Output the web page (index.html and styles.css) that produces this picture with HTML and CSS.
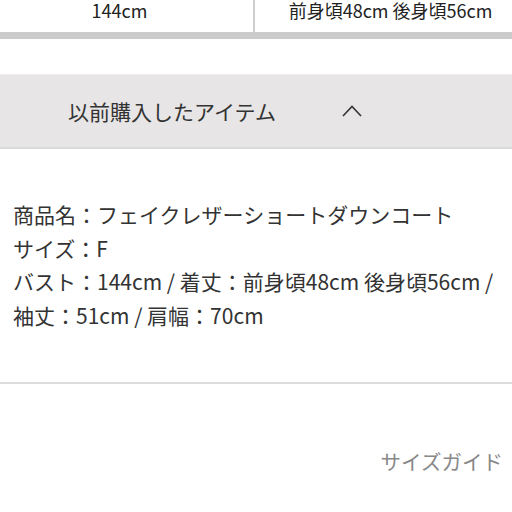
FILE: index.html
```html
<!DOCTYPE html>
<html lang="ja">
<head>
<meta charset="utf-8">
<link rel="stylesheet" href="styles.css">
</head>
<body>
<div class="size-table">
  <div class="cell cell-left">144cm</div>
  <div class="cell cell-right">前身頃48cm 後身頃56cm</div>
</div>
<div class="accordion">
  <span class="accordion-title">以前購入したアイテム</span>
  <svg class="chevron" width="20" height="12" viewBox="0 0 20 12"><path d="M1 11 L10 1.5 L19 11" fill="none" stroke="#333" stroke-width="1.6"/></svg>
</div>
<div class="details">
  <p>商品名：フェイクレザーショートダウンコート<br>サイズ：F<br>バスト：144cm / 着丈：前身頃48cm 後身頃56cm / 袖丈：51cm / 肩幅：70cm</p>
</div>
<div class="guide">
  <span class="guide-link">サイズガイド</span>
</div>
</body>
</html>
```
FILE: styles.css
```css
html, body {
  margin: 0;
  padding: 0;
  background: #fff;
}
body {
  font-family: "Noto Sans CJK JP", "Noto Sans", sans-serif;
  color: #333;
  width: 512px;
  overflow: hidden;
}
.size-table {
  display: grid;
  grid-template-columns: 255px 1fr;
  height: 32px;
  border-bottom: 7px solid #cbcbcb;
}
.cell {
  font-size: 18px;
  line-height: 20px;
  padding-top: 0;
  color: #222;
  text-align: center;
}
.cell-left {
  border-right: 2px solid #cfcfcf;
  padding-right: 14px;
}
.cell-right {
  padding-left: 14px;
}
.accordion {
  margin-top: 35px;
  height: 72px;
  background: #e7e5e5;
  border-top: 1px solid #efeeee;
  border-bottom: 2px solid #d9d9d9;
  display: flex;
  align-items: center;
  padding-left: 68px;
}
.accordion-title {
  font-size: 21px;
  line-height: 28px;
  color: #333;
  width: 274px;
}
.chevron {
  display: block;
  margin-top: -1px;
}
.details {
  padding: 49px 13px 49px 13px;
  border-bottom: 2px solid #dcdcdc;
}
.details p {
  margin: 0;
  font-size: 21px;
  line-height: 33.7px;
  color: #333;
}
.guide {
  display: flex;
  justify-content: flex-end;
  padding: 62px 9px 0 0;
}
.guide-link {
  font-size: 20.5px;
  line-height: 30px;
  color: #888;
}
```
